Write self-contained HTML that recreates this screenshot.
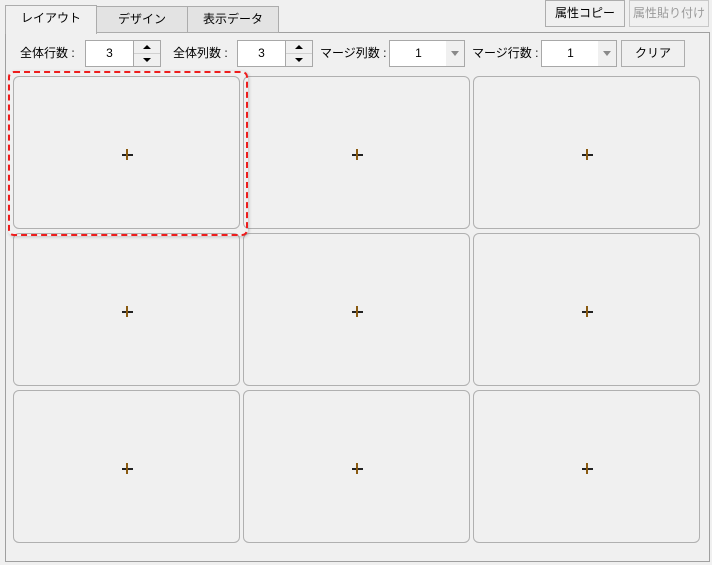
<!DOCTYPE html>
<html><head><meta charset="utf-8"><style>
*{box-sizing:border-box;margin:0;padding:0}
body{width:712px;height:565px;background:#f0f0f0;position:relative;overflow:hidden;font-family:"Liberation Sans","Noto Sans CJK JP",sans-serif;font-size:12px;color:#000}
.a{position:absolute}
.panel{left:5px;top:32px;width:705px;height:530px;border:1px solid #a0a0a0;background:#f0f0f0}
.tab{top:6px;height:27px;border:1px solid #acacac;background:#e3e3e3;text-align:center;line-height:24px}
.tab.sel{top:5px;height:29px;background:#f0f0f0;border-bottom:none;z-index:2}
.btn{border:1px solid #adadad;background:#f0f0f0;text-align:center;line-height:25px;height:27px}
.lbl{top:40px;line-height:27px}
.box{top:40px;height:27px;border:1px solid #a8a8a8;background:#fff;text-align:center;line-height:25px}
.spin{top:40px;height:27px;width:28px;border:1px solid #a8a8a8;background:#f0f0f0}
.cell{width:227px;height:153px;border:1px solid #b0b0b0;border-radius:6px}
.plus{position:absolute;left:50%;top:50%;width:11px;height:11px;margin:-4px 0 0 -5px}
.plus:before{content:"";position:absolute;left:0;top:5px;width:11px;height:2px;background:#222}
.plus:after{content:"";position:absolute;left:4px;top:0;width:2px;height:11px;background:#8a5a10}
.tri{position:absolute;left:50%;width:0;height:0;border-left:4px solid transparent;border-right:4px solid transparent;margin-left:-4px}
</style></head><body>
<div class="a panel"></div>
<div class="a tab sel" style="left:5px;width:92px">レイアウト</div>
<div class="a tab" style="left:96px;width:92px">デザイン</div>
<div class="a tab" style="left:187px;width:92px">表示データ</div>
<div class="a btn" style="left:545px;top:0;width:80px">属性コピー</div>
<div class="a btn" style="left:629px;top:0;width:80px;color:#9a9a9a;border-color:#c8c8c8">属性貼り付け</div>

<div class="a lbl" style="left:20px">全体行数 :</div>
<div class="a box" style="left:85px;width:49px">3</div>
<div class="a spin" style="left:133px"><div style="position:absolute;left:0;right:0;top:12px;border-top:1px solid #d0d0d0"></div><div class="tri" style="top:4px;border-bottom:4px solid #000"></div><div class="tri" style="top:17px;border-top:4px solid #000"></div></div>
<div class="a lbl" style="left:173px">全体列数 :</div>
<div class="a box" style="left:237px;width:49px">3</div>
<div class="a spin" style="left:285px"><div style="position:absolute;left:0;right:0;top:12px;border-top:1px solid #d0d0d0"></div><div class="tri" style="top:4px;border-bottom:4px solid #000"></div><div class="tri" style="top:17px;border-top:4px solid #000"></div></div>
<div class="a lbl" style="left:320px">マージ列数 :</div>
<div class="a box" style="left:389px;width:76px"><span style="position:absolute;left:0;width:57px;text-align:center">1</span><div style="position:absolute;right:0;top:0;width:18px;height:25px;background:#f0f0f0"><div class="tri" style="top:10px;border-top:5px solid #8a8a8a"></div></div></div>
<div class="a lbl" style="left:472px">マージ行数 :</div>
<div class="a box" style="left:541px;width:76px"><span style="position:absolute;left:0;width:57px;text-align:center">1</span><div style="position:absolute;right:0;top:0;width:18px;height:25px;background:#f0f0f0"><div class="tri" style="top:10px;border-top:5px solid #8a8a8a"></div></div></div>
<div class="a btn" style="left:621px;top:40px;width:64px">クリア</div>

<div class="a cell" style="left:13px;top:76px"><div class="plus"></div></div>
<div class="a cell" style="left:243px;top:76px"><div class="plus"></div></div>
<div class="a cell" style="left:473px;top:76px"><div class="plus"></div></div>
<div class="a cell" style="left:13px;top:233px"><div class="plus"></div></div>
<div class="a cell" style="left:243px;top:233px"><div class="plus"></div></div>
<div class="a cell" style="left:473px;top:233px"><div class="plus"></div></div>
<div class="a cell" style="left:13px;top:390px"><div class="plus"></div></div>
<div class="a cell" style="left:243px;top:390px"><div class="plus"></div></div>
<div class="a cell" style="left:473px;top:390px"><div class="plus"></div></div>

<div class="a" style="left:8px;top:71px;width:240px;height:165px;border:2px dashed #ee1c1c;border-radius:6px;box-shadow:1px 1px 3px rgba(0,0,0,0.2)"></div>
</body></html>
